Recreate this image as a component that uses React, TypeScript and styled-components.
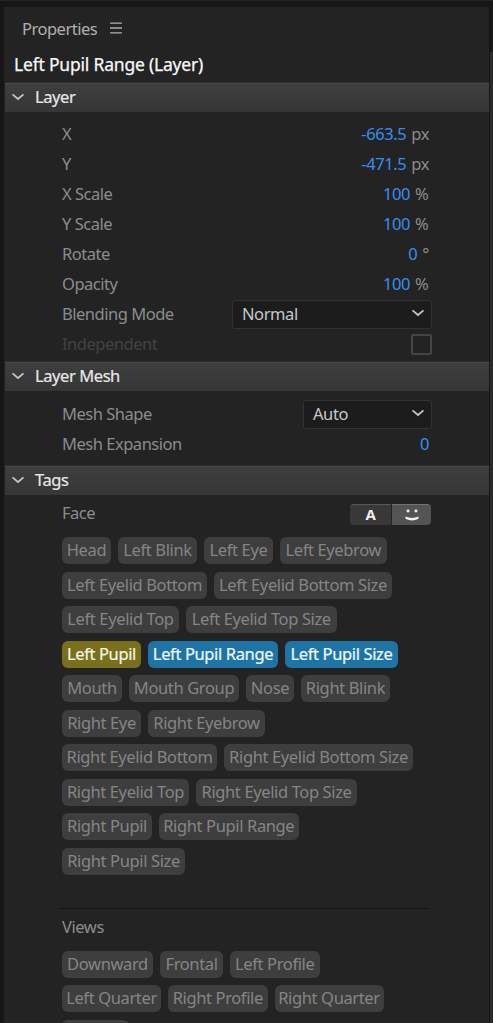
import React from "react";
import styled, { createGlobalStyle } from "styled-components";

const GlobalStyle = createGlobalStyle`
  * { box-sizing: border-box; }
  html, body { margin: 0; background: #161616; overflow: hidden; }
  body { font-family: "Noto Sans", "Open Sans", sans-serif; font-size: 16.5px; letter-spacing: -0.42px; }
`;

const Window = styled.div`
  display: flex;
  width: 493px;
  height: 1023px;
  padding: 6px 0 0 4px;
  overflow: hidden;
  background: #161616;
  border-top: 1px solid #232323;
`;

const Panel = styled.main`
  flex: 1;
  min-width: 0;
  background: #232323;
`;

const ScrollTrack = styled.div`
  width: 4px;
  margin-top: 45px;
  background: #2a2a2a;
  border-left: 1px solid #181818;
`;

const TabBar = styled.header`
  display: flex;
  align-items: center;
  gap: 13px;
  height: 42px;
  padding-left: 18px;
  letter-spacing: -0.5px;
  color: #b0b0b0;
`;

const TargetName = styled.h1`
  display: flex;
  align-items: center;
  height: 33px;
  margin: 0;
  padding: 0 0 4px 10px;
  font-size: 17.5px;
  font-weight: 400;
  letter-spacing: -0.2px;
  -webkit-text-stroke: 0.25px currentColor;
  color: #f8f8f8;
`;

const SectionBar = styled.div`
  display: flex;
  align-items: center;
  gap: 10px;
  height: 30px;
  margin-left: 1px;
  padding: 0 0 2px 6px;
  color: #e8e8e8;
  -webkit-text-stroke: 0.2px currentColor;
  border-top: 1px solid #2d2d2d;
  background: linear-gradient(#474747 0 1px, #3e3e3e 1px, #363636 100%);
`;

const SectionBody = styled.div<{ $height?: number; $top: number }>`
  height: ${(p) => (p.$height ? `${p.$height}px` : "auto")};
  padding: ${(p) => p.$top}px 57px 0 58px;
`;

const Row = styled.div<{ $disabled?: boolean }>`
  display: flex;
  align-items: center;
  justify-content: space-between;
  height: 30px;
  color: ${(p) => (p.$disabled ? "#424242" : "#8c8c8c")};
`;

const Label = styled.span`
  padding-bottom: 2px;
  letter-spacing: -0.48px;
`;

const Value = styled.span`
  display: flex;
  gap: 5px;
  padding: 0 3px 2px 0;
  color: #8c8c8c;
  b { font-weight: 400; color: #378ef0; }
`;

const Unit = styled.span<{ $wide: boolean }>`
  width: ${(p) => (p.$wide ? "14px" : "auto")};
`;

const Select = styled.div<{ $width: number }>`
  display: flex;
  align-items: center;
  justify-content: space-between;
  width: ${(p) => p.$width}px;
  height: 29px;
  padding: 0 6px 2px 9px;
  color: #c8c8c8;
  background: #1c1c1c;
  border: 1px solid #323232;
  border-radius: 3px;
`;

const Checkbox = styled.div`
  width: 21px;
  height: 21px;
  border: 2px solid #454545;
  border-radius: 2px;
`;

const GroupHeader = styled.div`
  display: flex;
  align-items: center;
  justify-content: space-between;
  height: 30px;
  margin-bottom: 9px;
  color: #8c8c8c;
`;

const Toggle = styled.div`
  display: flex;
  gap: 1px;
  margin: 2px 1px 0 0;
`;

const ToggleButton = styled.div<{ $active?: boolean }>`
  display: flex;
  align-items: center;
  justify-content: center;
  width: ${(p) => (p.$active ? 39 : 41)}px;
  height: 21px;
  padding-bottom: ${(p) => (p.$active ? 0 : 2)}px;
  font: 700 15px "Open Sans", sans-serif;
  color: #eeeeee;
  background: ${(p) => (p.$active ? "#545454" : "#383838")};
  border-top: 1px solid ${(p) => (p.$active ? "#737373" : "#575757")};
  border-radius: ${(p) => (p.$active ? "0 4px 4px 0" : "4px 0 0 4px")};
`;

const TagList = styled.div`
  display: flex;
  flex-wrap: wrap;
  gap: 7.55px 7px;
  width: 357px;
`;

const tones = {
  idle: ["#3e3e3e", "#858585"],
  primary: ["#7a701c", "#f4f4ea"],
  selected: ["#1d74a5", "#f2f8fb"],
};
type Tone = keyof typeof tones;

const TagChip = styled.div<{ $tone: Tone; $width: number }>`
  display: flex;
  align-items: center;
  justify-content: center;
  width: ${(p) => p.$width}px;
  height: 27px;
  padding-bottom: 2px;
  white-space: nowrap;
  letter-spacing: -0.37px;
  -webkit-text-stroke: ${(p) => (p.$tone === "idle" ? 0 : 0.2)}px currentColor;
  color: ${(p) => tones[p.$tone][1]};
  background: ${(p) => tones[p.$tone][0]};
  border-radius: 6px;
`;

const Divider = styled.hr`
  height: 1px;
  margin: 33px 3px 3px -2px;
  border: 0;
  background: #131313;
`;

type Tag = [label: string, width: number, tone?: Tone];

const faceTags: Tag[] = [
  ["Head", 49], ["Left Blink", 79], ["Left Eye", 69], ["Left Eyebrow", 106.5],
  ["Left Eyelid Bottom", 145], ["Left Eyelid Bottom Size", 178],
  ["Left Eyelid Top", 117], ["Left Eyelid Top Size", 150.5],
  ["Left Pupil", 79, "primary"], ["Left Pupil Range", 130, "selected"], ["Left Pupil Size", 113, "selected"],
  ["Mouth", 60], ["Mouth Group", 110], ["Nose", 48], ["Right Blink", 89],
  ["Right Eye", 79], ["Right Eyebrow", 117],
  ["Right Eyelid Bottom", 155], ["Right Eyelid Bottom Size", 189],
  ["Right Eyelid Top", 127], ["Right Eyelid Top Size", 161],
  ["Right Pupil", 90], ["Right Pupil Range", 139.5],
  ["Right Pupil Size", 123],
];

const viewTags: Tag[] = [
  ["Downward", 91], ["Frontal", 63], ["Left Profile", 89.5],
  ["Left Quarter", 99], ["Right Profile", 99.5], ["Right Quarter", 109],
  ["", 67],
];

const transforms = [
  ["X", "-663.5", "px"],
  ["Y", "-471.5", "px"],
  ["X Scale", "100", "%"],
  ["Y Scale", "100", "%"],
  ["Rotate", "0", "°"],
  ["Opacity", "100", "%"],
];

const Chevron = () => (
  <svg width="14" height="10" viewBox="0 0 14 10" fill="none" stroke="#c4c4c4" strokeWidth="1.8">
    <path d="M1.5 2.400 7 7l5.500-4.600" />
  </svg>
);

const Section = ({ title }: { title: string }) => (
  <SectionBar>
    <Chevron />
    {title}
  </SectionBar>
);

const Tags = ({ items }: { items: Tag[] }) => (
  <TagList>
    {items.map(([label, width, tone = "idle"]) => (
      <TagChip key={label} $width={width} $tone={tone}>{label}</TagChip>
    ))}
  </TagList>
);

export default function App() {
  return (
    <Window>
      <GlobalStyle />
      <Panel>
        <TabBar>
          Properties
          <svg width="12" height="12" viewBox="0 0 12 12" stroke="#b0b0b0" strokeWidth="1.3">
            <path d="M0 1.2h12M0 6h12M0 10.8h12" />
          </svg>
        </TabBar>
        <TargetName>Left Pupil Range (Layer)</TargetName>
        <Section title="Layer" />
        <SectionBody $top={7} $height={249}>
          {transforms.map(([label, value, unit]) => (
            <Row key={label}>
              <Label>{label}</Label>
              <Value><b>{value}</b><Unit $wide={unit === "%"}>{unit}</Unit></Value>
            </Row>
          ))}
          <Row>
            <Label>Blending Mode</Label>
            <Select $width={200}>Normal<Chevron /></Select>
          </Row>
          <Row $disabled>
            <Label>Independent</Label>
            <Checkbox />
          </Row>
        </SectionBody>
        <Section title="Layer Mesh" />
        <SectionBody $top={8} $height={74}>
          <Row>
            <Label>Mesh Shape</Label>
            <Select $width={129}>Auto<Chevron /></Select>
          </Row>
          <Row>
            <Label>Mesh Expansion</Label>
            <Value><b>0</b></Value>
          </Row>
        </SectionBody>
        <Section title="Tags" />
        <SectionBody $top={3}>
          <GroupHeader>
            <Label>Face</Label>
            <Toggle>
              <ToggleButton>A</ToggleButton>
              <ToggleButton $active>
                <svg width="14" height="12" viewBox="0 0 14 12" fill="#eeeeee">
                  <path d="M3 0l1.900 1.900L3 3.800 1.100 1.900zM11 0l1.900 1.900L11 3.800 9.100 1.900z" />
                  <path d="M.5 7.600q6.500 2.600 13 0v2.200q-6.500 3.200-13 0z" />
                </svg>
              </ToggleButton>
            </Toggle>
          </GroupHeader>
          <Tags items={faceTags} />
          <Divider />
          <GroupHeader>Views</GroupHeader>
          <Tags items={viewTags} />
        </SectionBody>
      </Panel>
      <ScrollTrack />
    </Window>
  );
}
